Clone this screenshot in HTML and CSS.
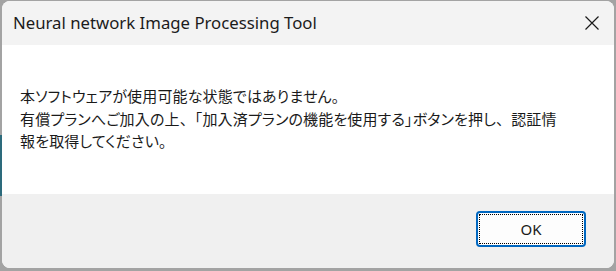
FILE: index.html
```html
<!DOCTYPE html>
<html lang="ja">
<head>
<meta charset="utf-8">
<title>Neural network Image Processing Tool</title>
<link rel="stylesheet" href="styles.css">
</head>
<body>
<div class="window">
  <div class="titlebar">
    <span class="title">Neural network Image Processing Tool</span>
    <span class="close">
      <svg width="16" height="16" viewBox="0 0 16 16"><path d="M1.5 1.5 L14.5 14.5 M14.5 1.5 L1.5 14.5" stroke="#1a1a1a" stroke-width="1.2" fill="none"/></svg>
    </span>
  </div>
  <div class="content">
    <p class="message">本ソフトウェアが使用可能な状態ではありません。<br>有償プランへご加入の上<span class="punct">、「</span>加入済プランの機能を使用する」ボタンを押し<span class="punct">、</span>認証情<br>報を取得してください。</p>
  </div>
  <div class="footer">
    <button class="ok"><span class="focus">OK</span></button>
  </div>
</div>
</body>
</html>
```

FILE: styles.css
```css
html, body {
  margin: 0;
  padding: 0;
}
body {
  width: 616px;
  height: 271px;
  background-color: #a3a3a3;
  background-image: linear-gradient(#2d6b7c, #2d6b7c);
  background-repeat: no-repeat;
  background-position: 0 135px;
  background-size: 2px 61px;
  overflow: hidden;
  padding: 1px 2px 3px 2px;
  box-sizing: border-box;
}
.window {
  width: 612px;
  height: 267px;
  border-radius: 8px;
  overflow: hidden;
  display: flex;
  flex-direction: column;
  background: #ffffff;
}
.titlebar {
  height: 44px;
  flex: none;
  background: #f3f3f3;
  display: flex;
  align-items: center;
  justify-content: space-between;
  padding: 0 14px 0 11px;
}
.title {
  font-family: "Noto Sans", "Open Sans", sans-serif;
  font-size: 16.75px;
  color: #1b1b1b;
  margin-top: -2px;
}
.close {
  display: flex;
  width: 16px;
  height: 16px;
  margin-top: -1px;
}
.content {
  height: 149px;
  flex: none;
  background: #ffffff;
  padding: 40px 0 0 18px;
  box-sizing: border-box;
}
.message {
  margin: 0;
  font-family: "Noto Sans CJK JP", "Noto Sans", sans-serif;
  font-size: 15px;
  line-height: 22.5px;
  letter-spacing: 0.15px;
  color: #1a1a1a;
  font-feature-settings: "palt";
}
.punct {
  font-feature-settings: normal;
}
.footer {
  flex: 1;
  background: #f0f0f0;
  display: flex;
  justify-content: flex-end;
  align-items: flex-start;
  padding: 17px 28px 0 0;
}
.ok {
  width: 110px;
  height: 36px;
  box-sizing: border-box;
  border: 2px solid #0067c0;
  border-radius: 4px;
  background: #fdfdfd;
  padding: 1px;
  margin: 0;
  display: flex;
}
.focus {
  flex: 1;
  border: 1px dotted #000;
  display: flex;
  align-items: center;
  justify-content: center;
  font-family: "Noto Sans", sans-serif;
  font-size: 15px;
  color: #1a1a1a;
}
```
